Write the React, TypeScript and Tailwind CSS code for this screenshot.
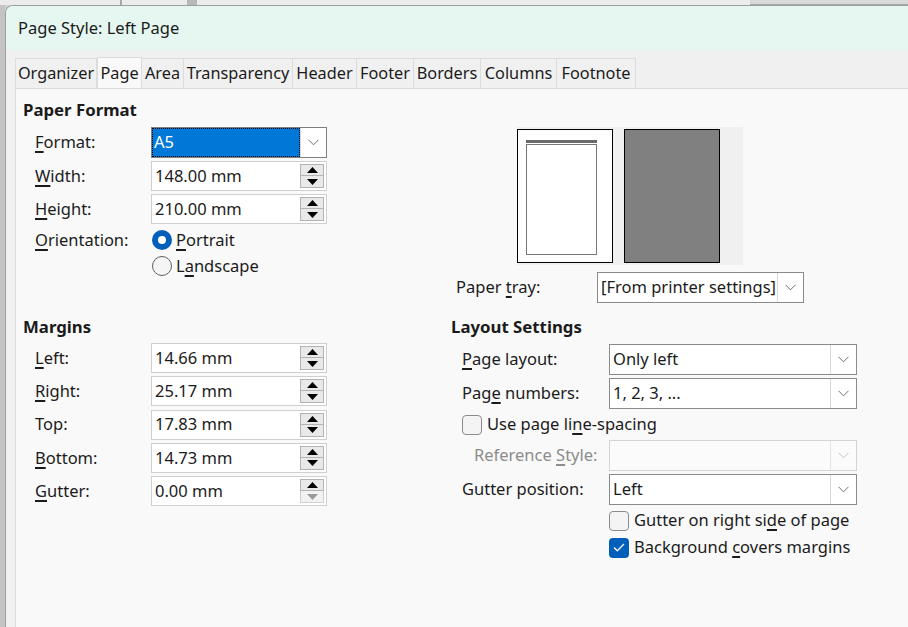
import React from "react";

const FONT = "font-['Noto_Sans',sans-serif]";

// label text with one mnemonic letter underlined
function M({ t, u }: { t: string; u?: number }) {
  if (u === undefined) return <>{t}</>;
  return (
    <>
      {t.slice(0, u)}
      <span className="underline decoration-[2px] underline-offset-[3px]">{t[u]}</span>
      {t.slice(u + 1)}
    </>
  );
}

function Chevron({ disabled }: { disabled?: boolean }) {
  return (
    <svg width="11" height="7" viewBox="0 0 11 7">
      <polyline
        points="0.5,0.8 5.5,5.8 10.5,0.8"
        fill="none"
        stroke={disabled ? "#c2c2c2" : "#6d6d6d"}
        strokeWidth="1"
      />
    </svg>
  );
}

function Tri({ up, disabled }: { up?: boolean; disabled?: boolean }) {
  return (
    <svg width="11" height="6" viewBox="0 0 11 6">
      <polygon points={up ? "5.5,0 11,6 0,6" : "0,0 11,0 5.5,6"} fill={disabled ? "#9a9a9a" : "#000"} />
    </svg>
  );
}

function Spin({ value, downDisabled }: { value: string; downDisabled?: boolean }) {
  return (
    <div className="flex h-[30px] w-[176px] border border-[#cfcfcf] bg-white">
      <div className="flex flex-1 items-center pl-[3px]">{value}</div>
      <div className="flex w-[26px] flex-col justify-center pr-[1px]">
        <div className="flex h-[12px] w-[24px] items-center justify-center border border-[#b3b3b3] bg-[#e9e9e9]">
          <Tri up />
        </div>
        <div
          className={
            downDisabled
              ? "flex h-[12px] w-[24px] items-center justify-center border border-t-0 border-[#cfcfcf] bg-[#f2f2f2]"
              : "flex h-[12px] w-[24px] items-center justify-center border border-t-0 border-[#b3b3b3] bg-[#e9e9e9]"
          }
        >
          <Tri disabled={downDisabled} />
        </div>
      </div>
    </div>
  );
}

function Combo({ value, w, disabled }: { value: string; w: string; disabled?: boolean }) {
  return (
    <div
      className={
        disabled
          ? `flex h-[31px] ${w} border border-[#d4d4d4] bg-[#fbfbfb]`
          : `flex h-[31px] ${w} border border-[#8a8a8a] bg-white`
      }
    >
      <div className="flex flex-1 items-center overflow-hidden whitespace-nowrap pl-[3px]">{value}</div>
      <div
        className={
          disabled
            ? "flex w-[26px] shrink-0 items-center justify-center border-l border-[#e3e3e3]"
            : "flex w-[26px] shrink-0 items-center justify-center border-l border-[#dadada]"
        }
      >
        <Chevron disabled={disabled} />
      </div>
    </div>
  );
}

function Radio({ on }: { on?: boolean }) {
  return on ? (
    <div className="flex h-[20px] w-[20px] items-center justify-center rounded-full bg-[#005fb8]">
      <div className="h-[8px] w-[8px] rounded-full bg-white" />
    </div>
  ) : (
    <div className="h-[20px] w-[20px] rounded-full border border-[#5f5f5f] bg-[#f5f5f5]" />
  );
}

function Check({ on }: { on?: boolean }) {
  return on ? (
    <div className="flex h-[20px] w-[20px] items-center justify-center rounded-[4px] bg-[#005fb8]">
      <svg width="12" height="9" viewBox="0 0 12 9">
        <polyline points="1,4.5 4.3,7.8 11,1" fill="none" stroke="white" strokeWidth="1.3" />
      </svg>
    </div>
  ) : (
    <div className="h-[20px] w-[20px] rounded-[4px] border border-[#8b8b8b] bg-[#f4f4f4]" />
  );
}

const tabs: [string, string][] = [
  ["Organizer", "w-[82px]"],
  ["Page", "w-[45px]"],
  ["Area", "w-[42px]"],
  ["Transparency", "w-[109px]"],
  ["Header", "w-[64px]"],
  ["Footer", "w-[57px]"],
  ["Borders", "w-[67px]"],
  ["Columns", "w-[76px]"],
  ["Footnote", "w-[79px]"],
];

function LeftRow({ label, u, children }: { label: string; u?: number; children: React.ReactNode }) {
  return (
    <div className="flex items-center">
      <div className="w-[116px] pl-[12px] box-content">
        <M t={label} u={u} />
      </div>
      {children}
    </div>
  );
}

export default function App() {
  return (
    <div className={`${FONT} relative h-[627px] w-[908px] overflow-hidden bg-[#d2d2d2] text-[16.5px] text-[#1b1b1b]`}>
      {/* document window behind the dialog */}
      <div className="flex h-[5px] bg-[#ececec]">
        <div className="w-[120px]" />
        <div className="w-[2px] bg-[#a7a7a7]" />
        <div className="w-[65px]" />
        <div className="w-[10px] bg-[#b8b8b8]" />
        <div className="flex-1" />
        <div className="w-[158px] border-b border-[#a8a8a8] bg-[#d9d9d9]" />
      </div>
      <div className="flex h-[622px]">
        <div className="w-[5px] bg-[#c4c4c4]" />
        {/* dialog */}
        <div className="flex flex-1 flex-col overflow-hidden rounded-tl-[8px] border-l border-t border-[#9f9f9f] bg-[#f0f0f0]">
          <div className="flex h-[44px] items-center bg-[#e6f7f1] pl-[12px] text-[16.5px]">Page Style: Left Page</div>
          {/* tab strip */}
          <div className="flex h-[38px] items-end pl-[9px]">
            {tabs.map(([t, w]) =>
              t === "Page" ? (
                <div
                  key={t}
                  className={`${w} -mb-px flex h-[32px] items-center justify-center border-x border-t border-[#dcdcdc] bg-[#f9f9f9] text-[16.3px]`}
                >
                  {t}
                </div>
              ) : (
                <div
                  key={t}
                  className={`${w} flex h-[30px] items-center justify-center border-t border-r border-[#dcdcdc] text-[16.3px] first:border-l`}
                >
                  {t}
                </div>
              )
            )}
          </div>
          {/* page panel */}
          <div className="ml-[9px] flex-1 border-l border-t border-[#dcdcdc] bg-[#f9f9f9] pl-[7px]">
            {/* upper half */}
            <div className="flex">
              <div className="w-[428px] pt-[10px]">
                <div className="flex h-[22px] items-center text-[16.8px] font-bold">Paper Format</div>
                <div className="mt-[6px] flex flex-col">
                  <LeftRow label="Format:" u={0}>
                    <div className="flex h-[31px] w-[176px] border border-[#7f7f7f] bg-white">
                      <div className="flex flex-1 items-center border border-dotted border-black bg-[#0078d7] pl-[1px] text-white">
                        A5
                      </div>
                      <div className="flex w-[26px] items-center justify-center border-l border-[#dadada]">
                        <Chevron />
                      </div>
                    </div>
                  </LeftRow>
                  <div className="mt-[3px]">
                    <LeftRow label="Width:" u={0}>
                      <Spin value="148.00 mm" />
                    </LeftRow>
                  </div>
                  <div className="mt-[3px]">
                    <LeftRow label="Height:" u={0}>
                      <Spin value="210.00 mm" />
                    </LeftRow>
                  </div>
                  <div className="mt-[6px] flex h-[20px] items-center">
                    <LeftRow label="Orientation:" u={0}>
                      <div className="flex items-center gap-[4px] pl-[1px]">
                        <Radio on />
                        <span>
                          <M t="Portrait" u={0} />
                        </span>
                      </div>
                    </LeftRow>
                  </div>
                  <div className="mt-[6px] flex h-[20px] items-center">
                    <LeftRow label="">
                      <div className="flex items-center gap-[4px] pl-[1px]">
                        <Radio />
                        <span>
                          <M t="Landscape" u={1} />
                        </span>
                      </div>
                    </LeftRow>
                  </div>
                </div>
              </div>
              <div className="pt-[38px]">
                <div className="ml-[66px] flex h-[138px] w-[226px] items-center gap-[11px] bg-[#f0f0f0]">
                  <div className="flex h-[134px] w-[96px] border border-black bg-white pl-[8px] pt-[10px]">
                    <div className="h-[115px] w-[71px] border-t-[3px] border-[#6b6b6b] pt-[1px]">
                      <div className="h-full w-full border-[1.5px] border-[#777777] bg-white" />
                    </div>
                  </div>
                  <div className="h-[134px] w-[96px] border border-black bg-[#808080]" />
                </div>
                <div className="mt-[7px] flex items-center">
                  <div className="w-[141px] pl-[5px] box-content">
                    <M t="Paper tray:" u={6} />
                  </div>
                  <Combo value="[From printer settings]" w="w-[207px]" />
                </div>
              </div>
            </div>
            {/* lower half */}
            <div className="mt-[13px] flex">
              <div className="w-[428px]">
                <div className="flex h-[22px] items-center text-[16.8px] font-bold">Margins</div>
                <div className="mt-[5px] flex flex-col gap-[3.3px]">
                  <LeftRow label="Left:" u={0}>
                    <Spin value="14.66 mm" />
                  </LeftRow>
                  <LeftRow label="Right:" u={0}>
                    <Spin value="25.17 mm" />
                  </LeftRow>
                  <LeftRow label="Top:">
                    <Spin value="17.83 mm" />
                  </LeftRow>
                  <LeftRow label="Bottom:" u={0}>
                    <Spin value="14.73 mm" />
                  </LeftRow>
                  <LeftRow label="Gutter:" u={0}>
                    <Spin value="0.00 mm" downDisabled />
                  </LeftRow>
                </div>
              </div>
              <div>
                <div className="flex h-[22px] items-center text-[16.8px] font-bold">Layout Settings</div>
                <div className="mt-[6px] flex flex-col">
                  <div className="flex items-center">
                    <div className="w-[147px] pl-[11px] box-content">
                      <M t="Page layout:" u={0} />
                    </div>
                    <Combo value="Only left" w="w-[248px]" />
                  </div>
                  <div className="mt-[3px] flex items-center">
                    <div className="w-[147px] pl-[11px] box-content">
                      <M t="Page numbers:" u={3} />
                    </div>
                    <Combo value="1, 2, 3, ..." w="w-[248px]" />
                  </div>
                  <div className="mt-[5px] flex h-[21px] items-center gap-[5px] pl-[11px]">
                    <Check />
                    <span>
                      <M t="Use page line-spacing" u={11} />
                    </span>
                  </div>
                  <div className="mt-[5px] flex items-center">
                    <div className="w-[135px] pl-[23px] text-[#8c8c8c] box-content">
                      <M t="Reference Style:" u={10} />
                    </div>
                    <Combo value="" w="w-[248px]" disabled />
                  </div>
                  <div className="mt-[3px] flex items-center">
                    <div className="w-[147px] pl-[11px] box-content">Gutter position:</div>
                    <Combo value="Left" w="w-[248px]" />
                  </div>
                  <div className="mt-[5px] flex h-[21px] items-center gap-[5px] pl-[158px]">
                    <Check />
                    <span>
                      <M t="Gutter on right side of page" u={18} />
                    </span>
                  </div>
                  <div className="mt-[6px] flex h-[21px] items-center gap-[5px] pl-[158px]">
                    <Check on />
                    <span>
                      <M t="Background covers margins" u={11} />
                    </span>
                  </div>
                </div>
              </div>
            </div>
          </div>
        </div>
      </div>
    </div>
  );
}
